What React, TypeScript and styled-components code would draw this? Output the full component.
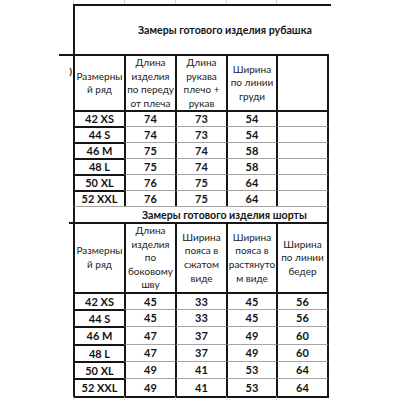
import * as React from 'react';
import styled, { createGlobalStyle } from 'styled-components';

const GlobalStyle = createGlobalStyle`
	html, body {
		margin: 0;
		padding: 0;
		background: #fff;
	}
	body {
		font-family: 'Lato', 'Open Sans', Arial, sans-serif;
		color: #141414;
	}
`;

const INK = '#161616';
const GRID = '#a4a4a4';
const FAINT = '#d6d6d6';

const Sheet = styled.div`
	width: 400px;
	height: 400px;
	overflow: hidden;
	padding-left: 59px;
	box-sizing: border-box;
	display: flex;
	flex-direction: column;
`;

const Row = styled.div<{ $h: number }>`
	display: grid;
	grid-template-columns: 14px 51px 51px 51px 50px 53px;
	height: ${p => p.$h}px;
	flex: none;
`;

const TopRule = styled.div`
	flex: none;
	margin-left: 14px;
	width: 258px;
	height: 2px;
	background: ${INK};
`;

const Gutter = styled.div`
	display: flex;
	flex-direction: column;
	align-items: flex-end;
`;

const Rule = styled.div<{ $w: number }>`
	width: ${p => p.$w}px;
	height: 2px;
	background: ${INK};
`;

const Stray = styled.span`
	margin: 10px 1px 0 0;
	font-size: 10px;
	line-height: 10px;
	font-weight: 700;
	color: #2a2a2a;
`;

const StubCell = styled.div<{ $top?: boolean }>`
	box-sizing: border-box;
	border-left: 1px solid ${FAINT};
	border-top: ${p => (p.$top ? `2px solid ${INK}` : 'none')};
`;

const Cell = styled.div<{ $top?: string; $end?: boolean }>`
	box-sizing: border-box;
	display: flex;
	align-items: center;
	justify-content: center;
	text-align: center;
	border-left: 2px solid ${INK};
	border-right: ${p => (p.$end ? `2px solid ${INK}` : 'none')};
	border-top: ${p => p.$top ?? `2px solid ${INK}`};
	min-width: 0;
`;

const TitleCell = styled.div<{ $closed?: boolean; $shift: number; $rule: string }>`
	grid-column: 2 / span 5;
	box-sizing: border-box;
	display: flex;
	align-items: center;
	padding-left: ${p => p.$shift}px;
	border-left: 2px solid ${INK};
	border-top: ${p => p.$rule};
	border-right: ${p => (p.$closed ? `2px solid ${INK}` : 'none')};
	font-weight: 700;
	font-size: 10.6px;
	white-space: nowrap;
`;

const HeadCell = styled(Cell)`
	font-size: 10px;
	line-height: 13.6px;
	white-space: nowrap;
	color: #1c1c1c;
`;

const DataCell = styled(Cell)`
	font-weight: 700;
	font-size: 11px;
	line-height: 12px;
	white-space: nowrap;
`;

const Lines = ({ text }: { text: string[] }) => (
	<div>
		{text.map((t, i) => (
			<React.Fragment key={i}>
				{i > 0 && <br />}
				{t}
			</React.Fragment>
		))}
	</div>
);

const sizes = ['42 XS', '44 S', '46 M', '48 L', '50 XL', '52 XXL'];

const shirtHead = [
	['Размерны', 'й ряд'],
	['Длина', 'изделия', 'по переду', 'от плеча'],
	['Длина', 'рукава', 'плечо +', 'рукав'],
	['Ширина', 'по линии', 'груди'],
	[],
];

const shirtRows = [
	['74', '73', '54', ''],
	['74', '73', '54', ''],
	['75', '74', '58', ''],
	['75', '74', '58', ''],
	['76', '75', '64', ''],
	['76', '75', '64', ''],
];

const shortsHead = [
	['Размерны', 'й ряд'],
	['Длина', 'изделия', 'по', 'боковому', 'шву'],
	['Ширина', 'пояса в', 'сжатом', 'виде'],
	['Ширина', 'пояса в', 'растянуто', 'м виде'],
	['Ширина', 'по линии', 'бедер'],
];

const shortsRows = [
	['45', '33', '45', '56'],
	['45', '33', '45', '56'],
	['47', '37', '49', '60'],
	['47', '37', '49', '60'],
	['49', '41', '53', '64'],
	['49', '41', '53', '64'],
];

const shortsHeights = [17, 17, 18, 17, 17, 18];

const Stub = ({ h, top }: { h: number; top?: boolean }) => (
	<Row $h={h}>
		<Gutter />
		{[0, 1, 2, 3, 4].map(i => (
			<StubCell key={i} $top={top} />
		))}
	</Row>
);

const HeadRow = ({ cols, h, rule, stray }: { cols: string[][]; h: number; rule: number; stray?: string }) => (
	<Row $h={h}>
		<Gutter>
			<Rule $w={rule} />
			{stray && <Stray>{stray}</Stray>}
		</Gutter>
		{cols.map((c, i) => (
			<HeadCell key={i} $end={i === cols.length - 1}>
				<Lines text={c} />
			</HeadCell>
		))}
	</Row>
);

const DataRows = ({ rows, heights }: { rows: string[][]; heights: number[] }) => (
	<>
		{rows.map((row, r) => (
			<Row key={r} $h={heights[r]}>
				<Gutter />
				<DataCell>{sizes[r]}</DataCell>
				{row.map((v, c) => (
					<DataCell
						key={c}
						$end={c === row.length - 1}
						$top={r === 0 ? undefined : `1px solid ${GRID}`}
					>
						{v}
					</DataCell>
				))}
			</Row>
		))}
	</>
);

export default function App() {
	return (
		<Sheet>
			<GlobalStyle />
			<Stub h={4} />
			<TopRule />

			<Row $h={48}>
				<Gutter />
				<TitleCell $shift={63} $rule="none">
					Замеры готового изделия рубашка
				</TitleCell>
			</Row>
			<HeadRow cols={shirtHead} h={56} rule={14} stray=")" />
			<DataRows rows={shirtRows} heights={[16, 16, 16, 16, 16, 16]} />

			<Row $h={16}>
				<Gutter />
				<TitleCell $shift={67} $closed $rule={`1px solid ${GRID}`}>
					Замеры готового изделия шорты
				</TitleCell>
			</Row>
			<HeadRow cols={shortsHead} h={70} rule={4} />
			<DataRows rows={shortsRows} heights={shortsHeights} />

			<Stub h={10} top />
		</Sheet>
	);
}
